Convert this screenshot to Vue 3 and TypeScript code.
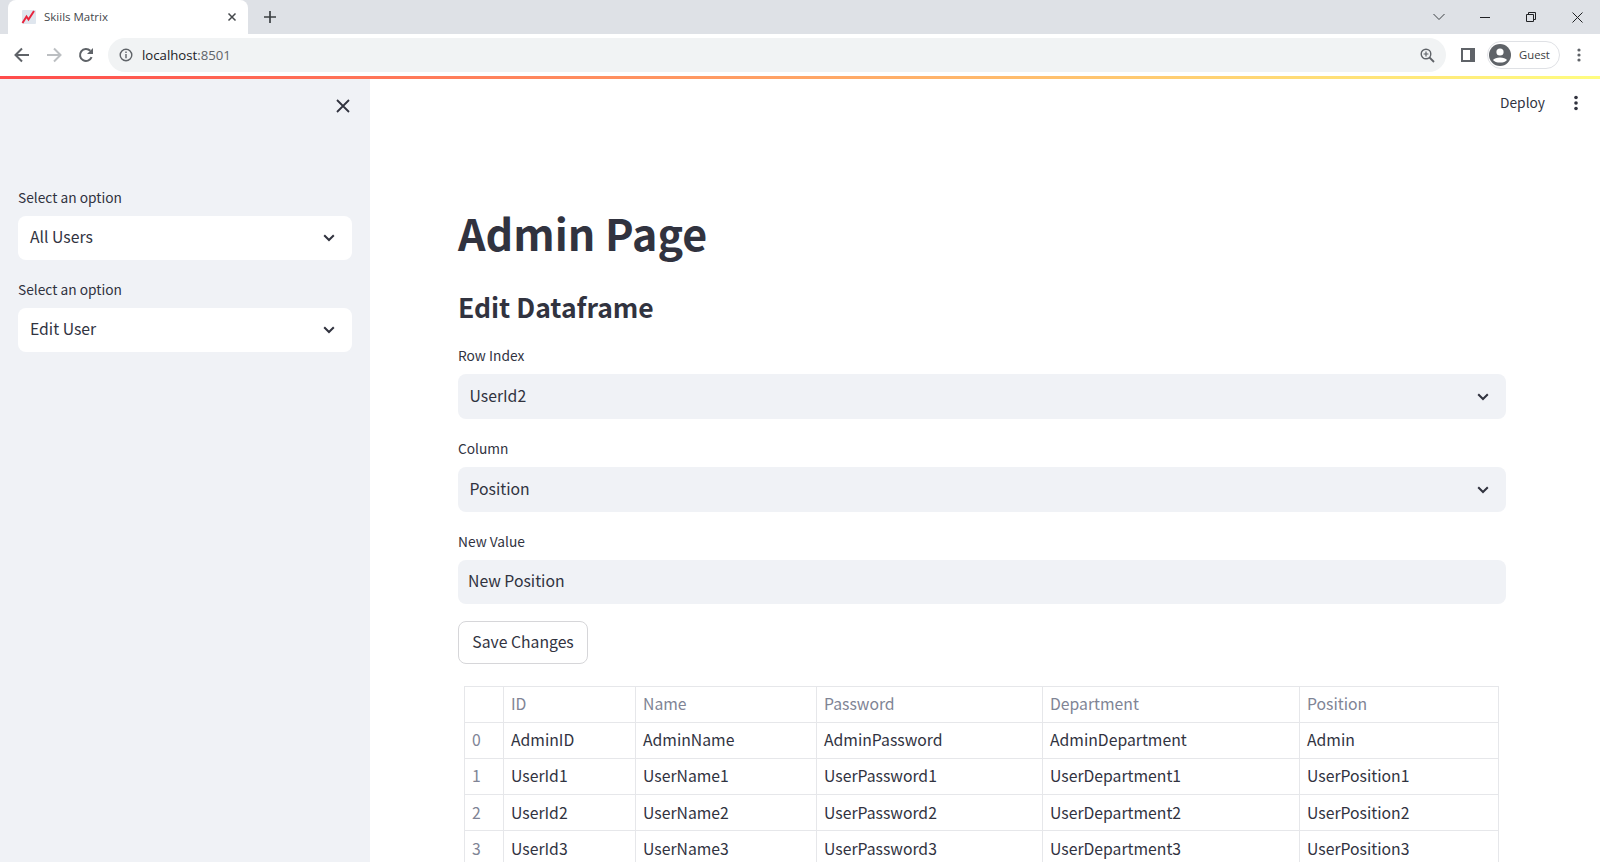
<script setup lang="ts">
interface Row { idx: number; id: string; name: string; password: string; department: string; position: string }
const rows: Row[] = [
  { idx: 0, id: 'AdminID', name: 'AdminName', password: 'AdminPassword', department: 'AdminDepartment', position: 'Admin' },
  { idx: 1, id: 'UserId1', name: 'UserName1', password: 'UserPassword1', department: 'UserDepartment1', position: 'UserPosition1' },
  { idx: 2, id: 'UserId2', name: 'UserName2', password: 'UserPassword2', department: 'UserDepartment2', position: 'UserPosition2' },
  { idx: 3, id: 'UserId3', name: 'UserName3', password: 'UserPassword3', department: 'UserDepartment3', position: 'UserPosition3' },
]
const sideSelects = ['All Users', 'Edit User']
const mainSelects = [
  { label: 'Row Index', value: 'UserId2' },
  { label: 'Column', value: 'Position' },
]
</script>

<template>
  <div class="window">
    <div class="tabstrip">
      <div class="tab">
        <svg class="favicon" width="16" height="16" viewBox="0 0 16 16">
          <rect x="1" y="1" width="14" height="14" rx="1" fill="#dfe6ee" />
          <path d="M1.5 14 L5.5 7.5 L7.5 10.5 L13 2" fill="none" stroke="#e8243c" stroke-width="2" />
        </svg>
        <span class="tab-title">Skiils Matrix</span>
        <svg class="tab-close" width="10" height="10" viewBox="0 0 10 10">
          <path d="M1.5 1.5 L8.5 8.5 M8.5 1.5 L1.5 8.5" stroke="#45484c" stroke-width="1.5" />
        </svg>
      </div>
      <svg class="newtab" width="14" height="14" viewBox="0 0 14 14">
        <path d="M7 1 V13 M1 7 H13" stroke="#3c4043" stroke-width="1.7" />
      </svg>
      <div class="win-controls">
        <div class="win-btn"><svg width="14" height="10" viewBox="0 0 14 10"><path d="M1.5 2 L7 7.5 L12.5 2" fill="none" stroke="#3c4043" stroke-width="1" /></svg></div>
        <div class="win-btn"><svg width="10" height="10" viewBox="0 0 10 10"><path d="M0 5.5 H10" stroke="#202124" stroke-width="1" /></svg></div>
        <div class="win-btn"><svg width="10" height="10" viewBox="0 0 10 10"><path d="M2.5 2.5 V.5 H9.5 V7.5 H7.5 M.5 2.5 H7.5 V9.5 H.5 Z" fill="none" stroke="#202124" stroke-width="1" /></svg></div>
        <div class="win-btn"><svg width="11" height="11" viewBox="0 0 11 11"><path d="M.5 .5 L10.5 10.5 M10.5 .5 L.5 10.5" stroke="#202124" stroke-width="1" /></svg></div>
      </div>
    </div>

    <div class="toolbar">
      <svg class="nav" width="16" height="16" viewBox="0 0 16 16"><path d="M15 8 H2 M8 1.5 L1.5 8 L8 14.5" fill="none" stroke="#5f6368" stroke-width="2" /></svg>
      <svg class="nav" width="16" height="16" viewBox="0 0 16 16"><path d="M1 8 H14 M8 1.5 L14.5 8 L8 14.5" fill="none" stroke="#bcbfc2" stroke-width="2" /></svg>
      <svg class="nav" width="16" height="16" viewBox="0 0 16 16"><path d="M13.6 10.2 A6 6 0 1 1 12.3 3.8" fill="none" stroke="#5f6368" stroke-width="2" /><path d="M15 1 V7 H9 Z" fill="#5f6368" /></svg>
      <div class="omnibox">
        <svg width="14" height="14" viewBox="0 0 14 14"><circle cx="7" cy="7" r="5.8" fill="none" stroke="#5f6368" stroke-width="1.4" /><path d="M7 6 V10.2 M7 3.6 V5" stroke="#5f6368" stroke-width="1.4" /></svg>
        <span class="url">localhost<span class="port">:8501</span></span>
        <svg class="zoom-ic" width="15" height="15" viewBox="0 0 15 15"><circle cx="6" cy="6" r="4.8" fill="none" stroke="#5f6368" stroke-width="1.4" /><path d="M9.5 9.5 L14 14" stroke="#5f6368" stroke-width="1.8" /><path d="M3.6 6 H8.4 M6 3.6 V8.4" stroke="#5f6368" stroke-width="1.2" /></svg>
      </div>
      <svg class="panel-ic" width="14" height="14" viewBox="0 0 14 14"><path d="M0 0 H14 V14 H0 Z M2 2 V12 H9 V2 Z" fill="#5f6368" fill-rule="evenodd" /></svg>
      <div class="profile">
        <svg width="22" height="22" viewBox="0 0 22 22">
          <circle cx="11" cy="11" r="11" fill="#5f6368" />
          <circle cx="11" cy="8" r="3.6" fill="#fff" />
          <path d="M4 16 C6 12.6 16 12.6 18 16 C16 19.4 6 19.4 4 16 Z" fill="#fff" />
        </svg>
        <span class="guest">Guest</span>
      </div>
      <svg class="chrome-dots" width="4" height="14" viewBox="0 0 4 14"><circle cx="2" cy="2" r="1.6" fill="#5f6368" /><circle cx="2" cy="7" r="1.6" fill="#5f6368" /><circle cx="2" cy="12" r="1.6" fill="#5f6368" /></svg>
    </div>

    <div class="rainbow"></div>

    <div class="page">
      <aside class="sidebar">
        <div class="side-close">
          <svg width="14" height="14" viewBox="0 0 14 14"><path d="M1 1 L13 13 M13 1 L1 13" stroke="#31333f" stroke-width="1.8" /></svg>
        </div>
        <div class="side-fields">
          <div v-for="s in sideSelects" :key="s" class="field">
            <label class="lbl">Select an option</label>
            <div class="select white">
              <span>{{ s }}</span>
              <svg width="12" height="8" viewBox="0 0 12 8"><path d="M1.2 1.2 L6 6 L10.8 1.2" fill="none" stroke="#31333f" stroke-width="2" /></svg>
            </div>
          </div>
        </div>
      </aside>

      <main class="main">
        <div class="app-head">
          <span>Deploy</span>
          <svg width="4" height="16" viewBox="0 0 4 16"><circle cx="2" cy="2.5" r="1.8" fill="#31333f" /><circle cx="2" cy="8" r="1.8" fill="#31333f" /><circle cx="2" cy="13.5" r="1.8" fill="#31333f" /></svg>
        </div>
        <div class="block">
          <h1>Admin Page</h1>
          <h2>Edit Dataframe</h2>
          <div v-for="m in mainSelects" :key="m.label" class="field main-field">
            <label class="lbl">{{ m.label }}</label>
            <div class="select tall">
              <span>{{ m.value }}</span>
              <svg width="12" height="8" viewBox="0 0 12 8"><path d="M1.2 1.2 L6 6 L10.8 1.2" fill="none" stroke="#31333f" stroke-width="2" /></svg>
            </div>
          </div>
          <div class="field input-field">
            <label class="lbl">New Value</label>
            <div class="input">New Position</div>
          </div>
          <button class="btn" type="button">Save Changes</button>
          <table class="df">
            <colgroup>
              <col style="width: 39px" /><col style="width: 132px" /><col style="width: 181px" />
              <col style="width: 226px" /><col style="width: 257px" /><col style="width: 199px" />
            </colgroup>
            <thead>
              <tr><th></th><th>ID</th><th>Name</th><th>Password</th><th>Department</th><th>Position</th></tr>
            </thead>
            <tbody>
              <tr v-for="r in rows" :key="r.idx">
                <td class="idx">{{ r.idx }}</td>
                <td>{{ r.id }}</td><td>{{ r.name }}</td><td>{{ r.password }}</td><td>{{ r.department }}</td><td>{{ r.position }}</td>
              </tr>
            </tbody>
          </table>
        </div>
      </main>
    </div>
  </div>
</template>

<style>
html, body { margin: 0; background: #fff; overflow: hidden; }
</style>

<style scoped>
.window {
  width: 1600px; height: 862px; overflow: hidden; display: flex; flex-direction: column;
  font-family: "Noto Sans CJK JP", "Noto Sans", sans-serif; color: #31333f;
}
.tabstrip { height: 34px; flex: none; background: #dee1e6; display: flex; align-items: center; padding-left: 8px; }
.tab {
  width: 240px; height: 34px; background: #fff; border-radius: 8px 8px 0 0; display: flex; align-items: center;
  padding: 0 11px 0 13px; box-sizing: border-box; font: 11.5px "Open Sans", sans-serif; color: #45484c;
}
.favicon { flex: none; }
.tab-title { margin-left: 7px; flex: 1; padding-bottom: 2px; }
.newtab { margin-left: 15px; }
.win-controls { margin-left: auto; display: flex; align-items: center; }
.win-btn { width: 46px; height: 28px; display: flex; align-items: center; justify-content: center; }
.toolbar { height: 42px; flex: none; background: #fff; display: flex; align-items: center; padding-left: 14px; box-sizing: border-box; }
.nav { margin-right: 16px; flex: none; }
.omnibox {
  width: 1338px; height: 34px; margin-left: -2px; border-radius: 17px; background: #f1f3f4; display: flex; align-items: center;
  padding: 0 11px 0 11px; box-sizing: border-box; flex: none;
}
.url { margin-left: 9px; font: 13.2px "Open Sans", sans-serif; color: #202124; }
.port { color: #5f6368; }
.zoom-ic { margin-left: auto; }
.panel-ic { margin-left: 15px; flex: none; }
.profile {
  margin-left: 12px; width: 73px; height: 28px; border: 1px solid #dfe1e5; border-radius: 14px; box-sizing: border-box;
  display: flex; align-items: center; gap: 8px; padding-left: 1px; font: 11.3px "Open Sans", sans-serif; color: #3c4043; flex: none;
}
.guest { padding-bottom: 2px; }
.chrome-dots { margin-left: 17px; flex: none; }
.rainbow { height: 3px; flex: none; background: linear-gradient(90deg, rgb(255, 75, 75), rgb(255, 253, 128)); }
.page { flex: 1; display: flex; min-height: 0; }
.sidebar { width: 370px; flex: none; background: #f0f2f6; padding: 0 18px; box-sizing: border-box; }
.side-close { display: flex; justify-content: flex-end; padding: 20px 2px 0 0; height: 34px; }
.side-fields { margin-top: 55px; display: flex; flex-direction: column; gap: 20px; }
.field { display: flex; flex-direction: column; }
.lbl { font-size: 13.75px; line-height: 18px; height: 20px; margin-bottom: 8px; color: #31333f; }
.select {
  height: 44px; border-radius: 8px; background: #f0f2f6; display: flex; align-items: center; justify-content: space-between;
  padding: 0 17px 0 12px; box-sizing: border-box; font-size: 15.75px;
}
.select span { padding-bottom: 3px; }
.select.white { background: #fff; }
.select.tall { height: 45px; padding-left: 11.5px; }
.main { flex: 1; min-width: 0; position: relative; }
.app-head {
  display: flex; justify-content: flex-end; align-items: center; gap: 29px; height: 48px; padding-right: 22px; font-size: 13.75px;
}
.app-head span { padding-bottom: 2px; }
.block { padding: 0 94px 0 88px; }
h1 { margin: 75px 0 0; font-size: 43px; line-height: 60px; font-weight: 700; color: #31333f; }
h2 { margin: 25px 0 0; font-size: 26.5px; line-height: 40px; font-weight: 600; color: #31333f; }
.main-field { margin-bottom: 20px; }
h2 + .main-field { margin-top: 19px; }
.input-field { margin-bottom: 17px; }
.input { height: 44px; border-radius: 8px; background: #f0f2f6; display: flex; align-items: center; padding: 0 0 3px 10px; box-sizing: border-box; font-size: 15.75px; }
.btn {
  height: 43px; width: 130px; background: #fff; border: 1px solid #d6d6d9; border-radius: 8px; font: inherit; font-size: 15.75px; color: #31333f; padding: 0 0 3px; display: block;
}
.df { margin: 22px 0 0 6px; border-collapse: collapse; table-layout: fixed; width: 1034px; font-size: 15.75px; }
.df th, .df td { border: 1px solid #e6e7ea; height: 36px; padding: 0 7px 3px; box-sizing: border-box; text-align: left; font-weight: 400; white-space: nowrap; }
.df tbody tr:nth-child(n + 3) td { padding-bottom: 1px; }
.df th { color: #808495; }
.df td.idx { color: #808495; }
</style>
